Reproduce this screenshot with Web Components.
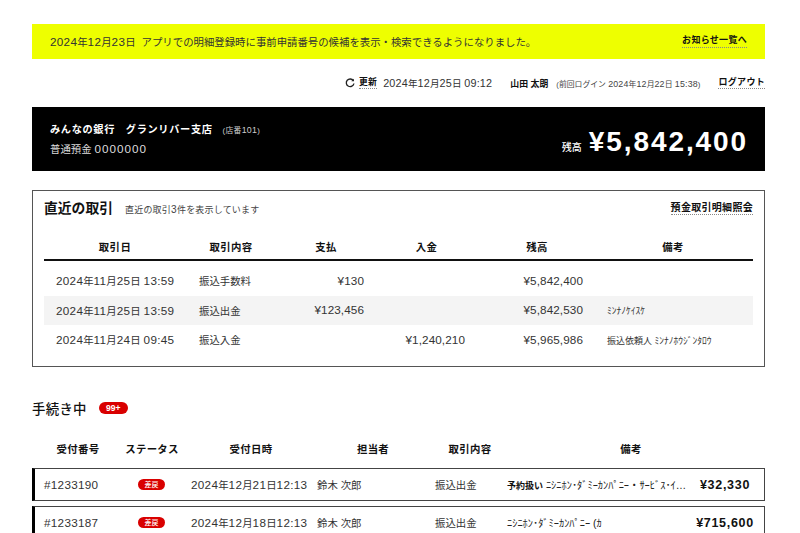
<!DOCTYPE html>
<html lang="ja">
<head>
<meta charset="utf-8">
<title>みんなの銀行</title>
<style>
  html, body { margin: 0; padding: 0; background: #fff; }
  body {
    height: 533px;
    overflow: hidden;
    font-family: "Liberation Sans", "Noto Sans CJK JP", sans-serif;
    color: #333;
  }
  main-page { display: flex; flex-direction: column; padding: 24px 35px 0 32px; }
</style>
</head>
<body>
<main-page>
  <notice-bar text="2024年12月23日">
    <dot-link slot="link" size="9">お知らせ一覧へ</dot-link>
  </notice-bar>
  <status-line></status-line>
  <balance-panel branch="みんなの銀行　グランリバー支店" store="(店番101)" account="普通預金 0000000" amount="¥5,842,400"></balance-panel>
  <recent-card></recent-card>
  <pending-list></pending-list>
</main-page>

<script>
// latin runs are set a bit larger than the kanji around them
const NUM_CSS = `.n { font-family: "Liberation Sans", sans-serif; font-size: 1.125em; letter-spacing: .3px; line-height: 1; }`;
const num = s => s.replace(/[#¥]?[0-9][0-9,:]*/g, '<span class="n">$&</span>');

class DotLink extends HTMLElement {
  constructor() {
    super();
    const size = this.getAttribute('size') || '10';
    this.attachShadow({ mode: 'open' }).innerHTML = `
      <style>
        :host {
          display: inline-block;
          font-size: ${size}px;
          font-weight: 700;
          line-height: 1.3;
          color: #111;
          letter-spacing: .3px;
          border-bottom: 1px dotted #888;
          white-space: nowrap;
        }
      </style>
      <slot></slot>`;
  }
}
customElements.define('dot-link', DotLink);

class NoticeBar extends HTMLElement {
  constructor() {
    super();
    const msg = 'アプリでの明細登録時に事前申請番号の候補を表示・検索できるようになりました。';
    this.attachShadow({ mode: 'open' }).innerHTML = `
      <style>
        :host {
          display: flex;
          align-items: center;
          height: 35px;
          padding: 0 18px;
          background: #eeff00;
          font-size: 10.4px;
          color: #333;
          white-space: nowrap;
        }
        .date { margin-right: 6px; }
        ::slotted(dot-link) { margin-left: auto; }
        ${NUM_CSS}
      </style>
      <span class="date">${num(this.getAttribute('text'))}</span>
      <span>${msg}</span>
      <slot name="link"></slot>`;
  }
}
customElements.define('notice-bar', NoticeBar);

class StatusLine extends HTMLElement {
  constructor() {
    super();
    this.attachShadow({ mode: 'open' }).innerHTML = `
      <style>
        :host {
          display: flex;
          align-items: center;
          justify-content: flex-end;
          height: 48px;
          font-size: 9.6px;
          color: #333;
          white-space: nowrap;
        }
        svg { width: 10px; height: 10px; margin-right: 4px; display: block; }
        .time { margin-left: 6px; }
        .time .n { letter-spacing: .2px; }
        .user { margin-left: 18px; font-size: 8.9px; font-weight: 700; color: #111; }
        .prev { margin-left: 8px; font-size: 7.85px; color: #444; }
        .prev .n { letter-spacing: .2px; }
        .out { margin-left: 18px; }
        ${NUM_CSS}
      </style>
      <svg viewBox="0 0 12 12" fill="none" stroke="#222" stroke-width="1.6">
        <path d="M10 3.2A4.6 4.6 0 1 0 10.7 6.6"/>
        <path d="M10.8 .8v3.2H7.6" fill="#222" stroke="none"/>
      </svg>
      <dot-link size="8.8">更新</dot-link>
      <span class="time">${num('2024年12月25日 09:12')}</span>
      <span class="user">山田 太朗</span>
      <span class="prev">${num('(前回ログイン 2024年12月22日 15:38)')}</span>
      <dot-link class="out" size="9">ログアウト</dot-link>`;
  }
}
customElements.define('status-line', StatusLine);

class BalancePanel extends HTMLElement {
  constructor() {
    super();
    const a = n => this.getAttribute(n);
    this.attachShadow({ mode: 'open' }).innerHTML = `
      <style>
        :host {
          display: flex;
          justify-content: space-between;
          height: 64px;
          box-sizing: border-box;
          padding: 0 18px;
          background: #000;
          color: #fff;
          white-space: nowrap;
        }
        .left { display: flex; flex-direction: column; gap: 4px; padding-top: 15px; }
        .branch { font-size: 10.2px; font-weight: 700; letter-spacing: .65px; line-height: 15px; }
        .store { font-size: 7.8px; font-weight: 400; color: #ccc; margin-left: 10px; letter-spacing: .3px; }
        .acct { font-size: 10.4px; color: #ddd; line-height: 15px; }
        .acct .n { letter-spacing: 1px; }
        .right { display: flex; align-items: baseline; gap: 7px; padding-top: 17px; }
        .label { font-size: 10px; font-weight: 500; }
        .amount { font-size: 28px; font-weight: 700; letter-spacing: 1.9px; line-height: 36px; margin-right: -1px; }
        ${NUM_CSS}
      </style>
      <div class="left">
        <div class="branch">${a('branch')}<span class="store">${num(a('store'))}</span></div>
        <div class="acct">${num(a('account'))}</div>
      </div>
      <div class="right"><span class="label">残高</span><span class="amount">${a('amount')}</span></div>`;
  }
}
customElements.define('balance-panel', BalancePanel);

const RECENT = [
  ['2024年11月25日 13:59', '振込手数料', '¥130', '', '¥5,842,400', ''],
  ['2024年11月25日 13:59', '振込出金', '¥123,456', '', '¥5,842,530', '<small>ﾐﾝﾅﾉｹｲｽｹ</small>'],
  ['2024年11月24日 09:45', '振込入金', '', '¥1,240,210', '¥5,965,986', '振込依頼人 <small>ﾐﾝﾅﾉﾎｳｼﾞﾝﾀﾛｳ</small>'],
];

class RecentCard extends HTMLElement {
  constructor() {
    super();
    const heads = ['取引日', '取引内容', '支払', '入金', '残高', '備考'];
    this.attachShadow({ mode: 'open' }).innerHTML = `
      <style>
        ${NUM_CSS}
        :host {
          display: block;
          height: 177px;
          box-sizing: border-box;
          margin-top: 19px;
          padding: 0 11px;
          border: 1px solid #555;
          color: #333;
          white-space: nowrap;
        }
        .top { display: flex; align-items: flex-start; height: 38px; padding-top: 8px; box-sizing: border-box; }
        h2 { margin: 0; font-size: 13.8px; font-weight: 700; color: #111; line-height: 20px; }
        .sub { margin: 5px 0 0 12px; font-size: 9px; line-height: 13px; color: #444; letter-spacing: .2px; }
        dot-link { margin-left: auto; margin-top: 2px; }
        .grid { display: grid; grid-template-columns: 142px 90px 100px 112px 105px 160px; }
        .head {
          height: 31px;
          margin-top: 1px;
          border-bottom: 2px solid #111;
          box-sizing: border-box;
          align-items: center;
          padding-top: 4px;
          font-size: 10.4px;
          font-weight: 700;
          letter-spacing: .4px;
          color: #111;
          text-align: center;
        }
        .head div:nth-child(4) { padding-right: 11px; }
        .head div:nth-child(5) { padding-right: 7px; }
        .rows { margin-top: 5px; }
        .row { height: 29.6px; align-items: center; font-size: 10.4px; }
        .row:nth-child(2) { background: #f4f4f4; }
        .c1 { padding-left: 12px; }
        .c2 { padding-left: 13px; }
        .c3 { padding-right: 12px; text-align: right; }
        .c4 { padding-right: 23px; text-align: right; }
        .c5 { padding-right: 10px; text-align: right; }
        .c3 .n, .c4 .n, .c5 .n { letter-spacing: .1px; }
        .c6 { padding-left: 14px; font-size: 9px; }
        small { font-size: 9.5px; }
      </style>
      <div class="top">
        <h2>直近の取引</h2>
        <span class="sub">${num('直近の取引3件を表示しています')}</span>
        <dot-link size="10">預金取引明細照会</dot-link>
      </div>
      <div class="grid head">${heads.map(h => `<div>${h}</div>`).join('')}</div>
      <div class="rows">
        ${RECENT.map(r => `<div class="grid row">${r.map((v, i) => `<div class="c${i + 1}">${i < 5 ? num(v) : v}</div>`).join('')}</div>`).join('')}
      </div>`;
  }
}
customElements.define('recent-card', RecentCard);

class PendingRow extends HTMLElement {
  constructor() {
    super();
    const a = n => this.getAttribute(n);
    const tag = a('tag') ? `<b>${a('tag')}</b> ` : '';
    this.attachShadow({ mode: 'open' }).innerHTML = `
      <style>
        :host {
          display: grid;
          grid-template-columns: 94px 53px 126px 118px 72px 188px 60px;
          align-items: center;
          height: 33px;
          box-sizing: border-box;
          padding-left: 9px;
          border: 1px solid #444;
          border-left: 3px solid #000;
          font-size: 10.4px;
          color: #333;
          white-space: nowrap;
        }
        .badge {
          display: block;
          width: 27px;
          height: 11px;
          border-radius: 6px;
          background: #d90000;
          color: #fff;
          font-size: 7px;
          font-weight: 500;
          line-height: 11px;
          text-align: center;
        }
        .note { font-size: 10.4px; color: #222; }
        .note b { font-size: 9px; color: #111; }
        .amount { font-size: 12.5px; font-weight: 700; color: #111; text-align: center; letter-spacing: .7px; }
        ${NUM_CSS}
      </style>
      <div>${num(a('no'))}</div>
      <div><span class="badge">差戻</span></div>
      <div>${num(a('date'))}</div>
      <div>${a('person')}</div>
      <div>${a('kind')}</div>
      <div class="note">${tag}${a('note')}</div>
      <div class="amount">${a('amount')}</div>`;
  }
}
customElements.define('pending-row', PendingRow);

class PendingList extends HTMLElement {
  constructor() {
    super();
    const heads = ['受付番号', 'ステータス', '受付日時', '担当者', '取引内容', '備考'];
    this.attachShadow({ mode: 'open' }).innerHTML = `
      <style>
        :host { display: block; white-space: nowrap; }
        .title { display: flex; align-items: center; gap: 12px; margin-top: 31px; height: 20px; }
        h2 { margin: 0; font-size: 13.4px; font-weight: 500; color: #111; letter-spacing: .3px; }
        .count {
          width: 29px;
          height: 12px;
          border-radius: 6px;
          background: #d90000;
          color: #fff;
          font-size: 8.6px;
          font-weight: 700;
          line-height: 12px;
          text-align: center;
        }
        .head {
          display: grid;
          grid-template-columns: 92px 56px 142px 102px 92px 230px;
          align-items: center;
          height: 38px;
          margin-top: 11px;
          font-size: 10.4px;
          font-weight: 700;
          letter-spacing: .3px;
          color: #111;
          text-align: center;
        }
        .rows { display: flex; flex-direction: column; gap: 5px; margin-top: 1px; }
      </style>
      <div class="title"><h2>手続き中</h2><span class="count">99+</span></div>
      <div class="head">${heads.map(h => `<div>${h}</div>`).join('')}</div>
      <div class="rows">
        <pending-row no="#1233190" date="2024年12月21日12:13" person="鈴木 次郎" kind="振込出金" tag="予約扱い" note="ﾆｼﾆﾎﾝ･ﾀﾞﾐｰｶﾝﾊﾟﾆｰ・ｻｰﾋﾞｽ･ｲ…" amount="¥32,330"></pending-row>
        <pending-row no="#1233187" date="2024年12月18日12:13" person="鈴木 次郎" kind="振込出金" note="ﾆｼﾆﾎﾝ･ﾀﾞﾐｰｶﾝﾊﾟﾆｰ (ｶ" amount="¥715,600"></pending-row>
      </div>`;
  }
}
customElements.define('pending-list', PendingList);

class MainPage extends HTMLElement {
  constructor() {
    super();
    this.attachShadow({ mode: 'open' }).innerHTML = `<slot></slot>`;
  }
}
customElements.define('main-page', MainPage);
</script>
</body>
</html>
